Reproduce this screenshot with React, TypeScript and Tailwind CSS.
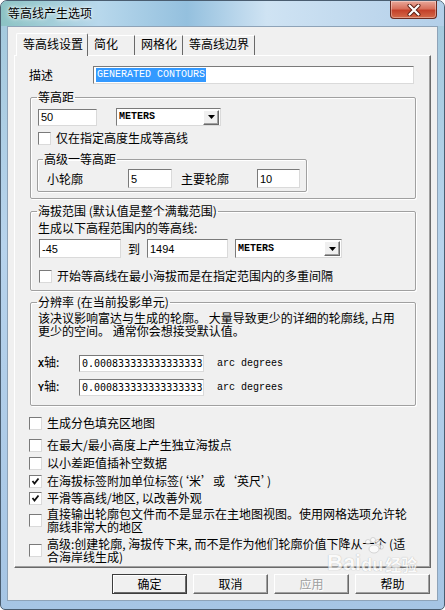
import React from 'react';

const sunken = 'bg-white border border-t-[#7a7a7a] border-l-[#7a7a7a] border-r-[#dadada] border-b-[#dadada]';
const raised = 'border border-t-white border-l-white border-r-[#696969] border-b-[#696969] shadow-[inset_-1px_-1px_0_#a0a0a0]';
const mono = "font-['DejaVu_Sans_Mono',monospace] text-[10px]";
const serifMono = "font-['Liberation_Mono',monospace] text-[10px] font-bold";

const Check: React.FC<{ checked?: boolean }> = ({ checked }) => (
  <span className={`w-[13px] h-[13px] shrink-0 flex items-center justify-center ${sunken}`}>
    {checked && (
      <svg width="9" height="9" viewBox="0 0 9 9">
        <path d="M1.5 4 L3.5 6.5 L7.5 1.5" stroke="#111" strokeWidth="1.8" fill="none" />
      </svg>
    )}
  </span>
);

const Select: React.FC<{ className: string }> = ({ className }) => (
  <div className={`flex items-center ${sunken} ${className}`}>
    <span className={`flex-1 pl-[2px] ${serifMono}`}>METERS</span>
    <span className={`w-[16px] h-[15px] mr-[1px] flex items-center justify-center bg-[#f0f0f0] ${raised}`}>
      <svg width="7" height="4" viewBox="0 0 7 4">
        <path d="M0 0 H7 L3.5 4 Z" fill="#000" />
      </svg>
    </span>
  </div>
);

const Num: React.FC<{ className: string; value: string }> = ({ className, value }) => (
  <div className={`flex items-center pl-[2px] font-['Liberation_Sans',sans-serif] text-[11px] ${sunken} ${className}`}>
    {value}
  </div>
);

const Group: React.FC<{ title: string; className: string; children: React.ReactNode }> = ({ title, className, children }) => (
  <fieldset className={`border border-[#a0a0a0] shadow-[inset_1px_1px_0_#fff,1px_1px_0_#fff] rounded-[2px] ${className}`}>
    <legend className="-ml-[1px] px-[1px]">{title}</legend>
    {children}
  </fieldset>
);

const Row: React.FC<{ checked?: boolean; className: string; children: React.ReactNode }> = ({ checked, className, children }) => (
  <div className={`flex items-center ml-[14px] ${className}`}>
    <Check checked={checked} />
    <span className="ml-[5px] whitespace-nowrap">{children}</span>
  </div>
);

export default function App() {
  return (
    <div className="relative w-[445px] h-[610px] overflow-hidden rounded-t-[7px] rounded-b-[5px] border border-[#4a5d70] bg-[linear-gradient(180deg,#a3c9dc_0%,#b7d3ec_40%,#a6c5e4_100%)] text-[12px] leading-[14px] text-black font-['Noto_Sans_CJK_SC',sans-serif]">
      <div className="h-[25px] flex justify-between items-start bg-[linear-gradient(90deg,#8cc3c4_0%,#b8d8ec_22%,#94c0de_42%,#cfe3f3_60%,#b3cfe9_100%)]">
        <span className="ml-[7px] mt-[5px] [text-shadow:0_0_6px_#fff,0_0_3px_#fff]">等高线产生选项</span>
        <div className="mr-[7px] w-[47px] h-[18px] flex items-center justify-center rounded-b-[4px] border border-t-0 border-[#6b2a20] bg-[linear-gradient(180deg,#e9a89a_0%,#d7705c_45%,#c4412a_55%,#d46a4a_100%)] shadow-[inset_0_0_0_1px_rgba(255,255,255,0.35)]">
          <svg width="14" height="12" viewBox="0 0 14 12">
            <path d="M2.5 1.5 L11.5 10.5 M11.5 1.5 L2.5 10.5" stroke="#5a1c12" strokeWidth="4" strokeLinecap="round" />
            <path d="M2.5 1.5 L11.5 10.5 M11.5 1.5 L2.5 10.5" stroke="#fff" strokeWidth="2.2" strokeLinecap="round" />
          </svg>
        </div>
      </div>

      <div className="mx-[6px] h-[575px] border border-[#8ea3b8] bg-[#f0f0f0] px-[6px] pt-[6px]">
        <div className="h-[22px] flex items-end ml-[2px]">
          <div className="relative z-10 h-[23px] -mb-px w-[72px] pl-[6px] pt-[3px] bg-[#f0f0f0] border-l border-t border-r border-l-white border-t-white border-r-[#696969] rounded-t-[2px]">等高线设置</div>
          <div className="h-[20px] w-[47px] pl-[6px] pt-[1px] border-t border-r border-t-white border-r-[#696969]">简化</div>
          <div className="h-[20px] w-[48px] pl-[6px] pt-[1px] border-t border-r border-t-white border-r-[#696969]">网格化</div>
          <div className="h-[20px] w-[72px] pl-[6px] pt-[1px] border-t border-r border-t-white border-r-[#696969]">等高线边界</div>
        </div>

        <div className={`h-[513px] ${raised}`}>
          <div className="mt-[10px] flex items-center h-[18px]">
            <span className="ml-[14px] w-[64px]">描述</span>
            <div className={`w-[321px] h-[18px] flex items-center ${sunken}`}>
              <span className="ml-[2px] px-[1px] bg-[#3399ff] text-white leading-[14px] font-['Liberation_Mono',monospace] text-[10px]">GENERATED CONTOURS</span>
            </div>
          </div>

          <Group title="等高距" className="mt-[6px] ml-[15px] w-[386px] pl-[7px] pb-[6px]">
            <div className="mt-[4px] flex items-center gap-[19px]">
              <Num className="w-[59px] h-[17px]" value="50" />
              <Select className="w-[105px] h-[18px]" />
            </div>
            <div className="mt-[5px] flex items-center">
              <Check />
              <span className="ml-[5px]">仅在指定高度生成等高线</span>
            </div>
            <Group title="高级一等高距" className="mt-[7px] -ml-[1px] w-[270px] pl-[6px] pb-[3px]">
              <div className="mt-[3px] flex items-center h-[19px]">
                <span className="ml-[3px] w-[81px]">小轮廓</span>
                <Num className="w-[44px] h-[19px]" value="5" />
                <span className="ml-[9px] w-[76px]">主要轮廓</span>
                <Num className="w-[43px] h-[19px]" value="10" />
              </div>
            </Group>
          </Group>

          <Group title="海拔范围 (默认值是整个满载范围)" className="mt-[5px] ml-[15px] w-[386px] pl-[7px] pb-[7px]">
            <div className="mt-[3px]">生成以下高程范围内的等高线:</div>
            <div className="mt-[4px] ml-[1px] flex items-center h-[19px]">
              <Num className="w-[82px] h-[19px]" value="-45" />
              <span className="w-[26px] text-center">到</span>
              <Num className="w-[81px] h-[19px]" value="1494" />
              <Select className="ml-[7px] w-[107px] h-[19px]" />
            </div>
            <div className="mt-[11px] ml-[1px] flex items-center">
              <Check />
              <span className="ml-[5px] whitespace-nowrap">开始等高线在最小海拔而是在指定范围内的多重间隔</span>
            </div>
          </Group>

          <Group title="分辨率 (在当前投影单元)" className="mt-[4px] ml-[15px] w-[386px] pl-[7px] pb-[9px]">
            <div className="mt-[2px] leading-[13px] whitespace-nowrap">
              该决议影响富达与生成的轮廓。 大量导致更少的详细的轮廓线, 占用<br />
              更少的空间。 通常你会想接受默认值。
            </div>
            <div className="mt-[18px] flex items-center h-[17px]">
              <span className={`w-[41px] ${serifMono}`}>X<span className="font-['Noto_Sans_CJK_SC',sans-serif] font-normal text-[12px]">轴:</span></span>
              <div className={`w-[125px] h-[17px] flex items-center pl-[2px] ${mono} ${sunken}`}>0.000833333333333333</div>
              <span className="ml-[13px] font-['Liberation_Mono',monospace] text-[10px]">arc degrees</span>
            </div>
            <div className="mt-[7px] flex items-center h-[17px]">
              <span className={`w-[41px] ${serifMono}`}>Y<span className="font-['Noto_Sans_CJK_SC',sans-serif] font-normal text-[12px]">轴:</span></span>
              <div className={`w-[125px] h-[17px] flex items-center pl-[2px] ${mono} ${sunken}`}>0.000833333333333333</div>
              <span className="ml-[13px] font-['Liberation_Mono',monospace] text-[10px]">arc degrees</span>
            </div>
          </Group>

          <Row className="mt-[10px] h-[14px]">生成分色填充区地图</Row>
          <Row className="mt-[8px] h-[14px]">在最大/最小高度上产生独立海拔点</Row>
          <Row className="mt-[4px] h-[14px]">以小差距值插补空数据</Row>
          <Row checked className="mt-[4px] h-[14px]">在海拔标签附加单位标签(‘米’或‘英尺’)</Row>
          <Row checked className="mt-[3px] h-[14px]">平滑等高线/地区, 以改善外观</Row>
          <div className="mt-[2px] ml-[14px] flex items-center">
            <Check />
            <span className="ml-[5px] leading-[13px] whitespace-nowrap">
              直接输出轮廓包文件而不是显示在主地图视图。使用网格选项允许轮<br />廓线非常大的地区
            </span>
          </div>
          <div className="mt-[4px] ml-[14px] flex items-center">
            <Check />
            <span className="ml-[5px] leading-[13px] whitespace-nowrap">
              高级:创建轮廓, 海拔传下来, 而不是作为他们轮廓价值下降从一个 (适<br />合海岸线生成)
            </span>
          </div>
        </div>

        <div className="mt-[6px] pr-[1px] flex justify-end gap-[6px]">
          <div className="w-[75px] h-[20px] flex items-center justify-center border border-[#3c3c3c] shadow-[inset_1px_1px_0_#fff,inset_-1px_-1px_0_#696969]">确定</div>
          <div className={`w-[75px] h-[20px] flex items-center justify-center ${raised}`}>取消</div>
          <div className={`w-[75px] h-[20px] flex items-center justify-center text-[#a0a0a0] [text-shadow:1px_1px_0_#fff] ${raised}`}>应用</div>
          <div className={`w-[75px] h-[20px] flex items-center justify-center ${raised}`}>帮助</div>
        </div>
      </div>

      <div className="absolute left-[326px] top-[550px] flex items-end opacity-70 pointer-events-none font-['Liberation_Sans',sans-serif] font-bold text-white [text-shadow:0_0_1px_#888]">
        <span className="text-[22px] leading-[24px]">Bai</span>
        <span className="relative text-[18px] leading-[20px]">
          <svg className="absolute -top-[18px] left-[2px]" width="22" height="18" viewBox="0 0 22 18">
            <g fill="#fff" stroke="#aaa" strokeWidth="0.6">
              <circle cx="5" cy="5" r="2.5" />
              <circle cx="10" cy="3" r="2.5" />
              <circle cx="15" cy="5" r="2.5" />
              <circle cx="18" cy="10" r="2.3" />
              <ellipse cx="11" cy="12" rx="5" ry="4" />
            </g>
          </svg>
          du
        </span>
        <span className="ml-[2px] text-[16px] leading-[22px] font-['Noto_Sans_CJK_SC',sans-serif]">经验</span>
      </div>
    </div>
  );
}
